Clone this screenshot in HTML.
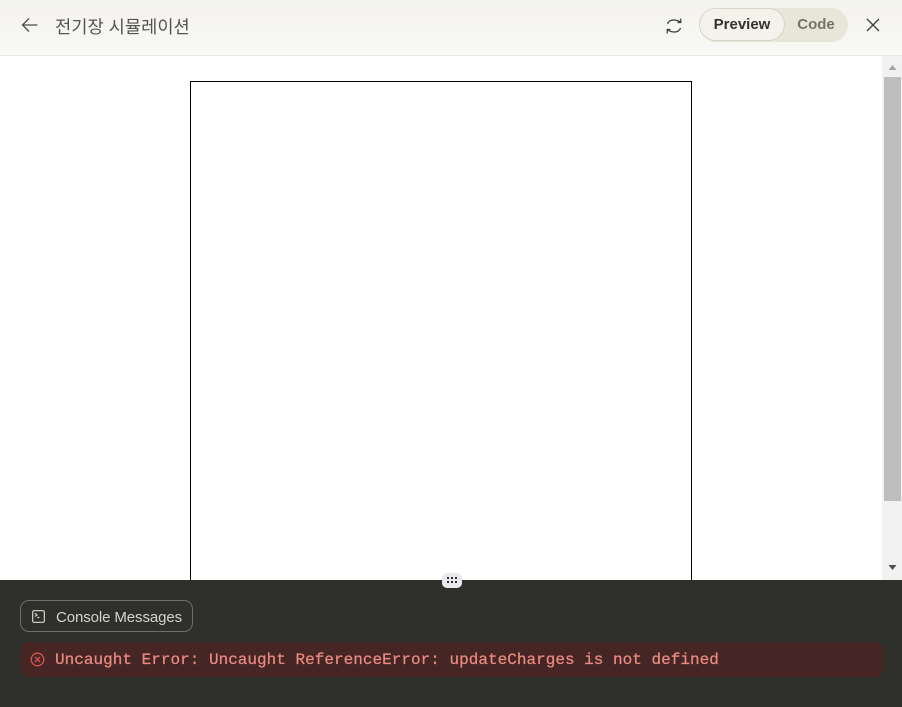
<!DOCTYPE html>
<html lang="ko">
<head>
<meta charset="utf-8">
<title>전기장 시뮬레이션</title>
<style>
html,body{margin:0;padding:0;width:902px;height:707px;overflow:hidden;background:#fff}
body{position:relative;font-family:"Liberation Sans","Noto Sans CJK KR",sans-serif}
.a{position:absolute}
#head{left:0;top:0;width:902px;height:55px;background:linear-gradient(#f4f3ee,#f8f8f6);border-bottom:1px solid #e9e8e3}
#title{left:55px;top:15px;font-size:17.65px;line-height:24px;color:#55544f;font-family:"Noto Sans CJK KR","NanumGothic",sans-serif;white-space:nowrap}
#toggle{left:699px;top:8px;width:149px;height:34px;border-radius:17px;background:#e8e5d9}
#prev{left:700px;top:9px;width:84px;height:31px;border-radius:16px;background:#f4f2ea;box-shadow:0 0 0 1px #d8d5c8;text-align:center;font-weight:700;font-size:15px;line-height:32px;color:#33322e}
#code{left:785px;top:9px;width:62px;height:31px;text-align:center;font-weight:700;font-size:15px;line-height:32px;color:#76746a}
#frame{left:190px;top:81px;width:500px;height:510px;border:1px solid #000;background:#fff}
#track{left:882px;top:56px;width:20px;height:524px;background:#f1f1f1}
#thumb{left:884px;top:77px;width:17px;height:424px;background:#bebebe}
#dock{left:0;top:580px;width:902px;height:127px;background:#2f2f2b}
#handle{left:442px;top:573px;width:20px;height:15px;border-radius:5px;background:#e9e9ee}
#btn{left:20px;top:600px;width:171px;height:30px;border:1px solid #6f6f69;border-radius:9px}
#btnt{left:56px;top:608px;font-size:15px;line-height:20px;letter-spacing:-.1px;color:#d6d4cc;white-space:nowrap}
#err{left:20px;top:642px;width:863px;height:35px;border-radius:8px;background:#452624}
#errt{left:55px;top:650px;font-family:"Liberation Mono",monospace;font-size:16px;line-height:20px;letter-spacing:.02px;color:#e98a82;white-space:pre;-webkit-text-stroke:.25px #e98a82}
svg{position:absolute;overflow:visible}
</style>
</head>
<body>
<div class="a" id="frame"></div>
<div class="a" id="head"></div>
<svg style="left:21px;top:16px" width="18" height="18" viewBox="0 0 18 18" fill="none" stroke="#4d4c48" stroke-width="1.3"><path d="M1.5 9H16.5M8 2.5L1.5 9L8 15.5"/></svg>
<div class="a" id="title">전기장 시뮬레이션</div>
<svg style="left:665px;top:17px" width="18" height="18" viewBox="0 0 18 18" fill="none" stroke="#3d3d3a" stroke-width="1.2"><path d="M2.5 7C3.5 4.2 6 3 8.5 3C11 3 13 3.5 15.5 5M12.5 5.5H15.8V1.5"/><path d="M15.5 11C14.5 13.8 12 15 9.5 15C7 15 5 14.5 2.5 13M5.5 12.5H2.2V16.5"/></svg>
<div class="a" id="toggle"></div>
<div class="a" id="prev">Preview</div>
<div class="a" id="code">Code</div>
<svg style="left:866px;top:18px" width="14" height="14" viewBox="0 0 14 14" fill="none" stroke="#3d3d3a" stroke-width="1.3"><path d="M1 1L13 13M13 1L1 13"/></svg>
<div class="a" id="track"></div>
<div class="a" id="thumb"></div>
<svg style="left:888px;top:64px" width="9" height="7" viewBox="0 0 9 7"><path d="M4.5 1L8.5 6H.5Z" fill="#a3a3a3"/></svg>
<svg style="left:888px;top:564px" width="9" height="7" viewBox="0 0 9 7"><path d="M.5 1H8.5L4.5 6Z" fill="#505050"/></svg>
<div class="a" id="dock"></div>
<div class="a" id="handle"></div>
<svg style="left:447px;top:577px" width="10" height="6" viewBox="0 0 10 6" fill="#2f2f2b"><rect x="0" y="0" width="2" height="2"/><rect x="4" y="0" width="2" height="2"/><rect x="8" y="0" width="2" height="2"/><rect x="0" y="4" width="2" height="2"/><rect x="4" y="4" width="2" height="2"/><rect x="8" y="4" width="2" height="2"/></svg>
<div class="a" id="btn"></div>
<svg style="left:32px;top:610px" width="13" height="13" viewBox="0 0 13 13" fill="none" stroke="#c9c7bf" stroke-width="1.3"><rect x=".65" y=".65" width="11.7" height="11.7" rx="1.5"/><path d="M3 3.2L5 5L3 6.5M5.2 7.5H7.5"/></svg>
<div class="a" id="btnt">Console Messages</div>
<div class="a" id="err"></div>
<svg style="left:30px;top:652px" width="15" height="15" viewBox="0 0 15 15" fill="none" stroke="#d9534f" stroke-width="1.3"><circle cx="7.5" cy="7.5" r="6.3"/><path d="M5 5L10 10M10 5L5 10"/></svg>
<div class="a" id="errt">Uncaught Error: Uncaught ReferenceError: updateCharges is not defined</div>
</body>
</html>
